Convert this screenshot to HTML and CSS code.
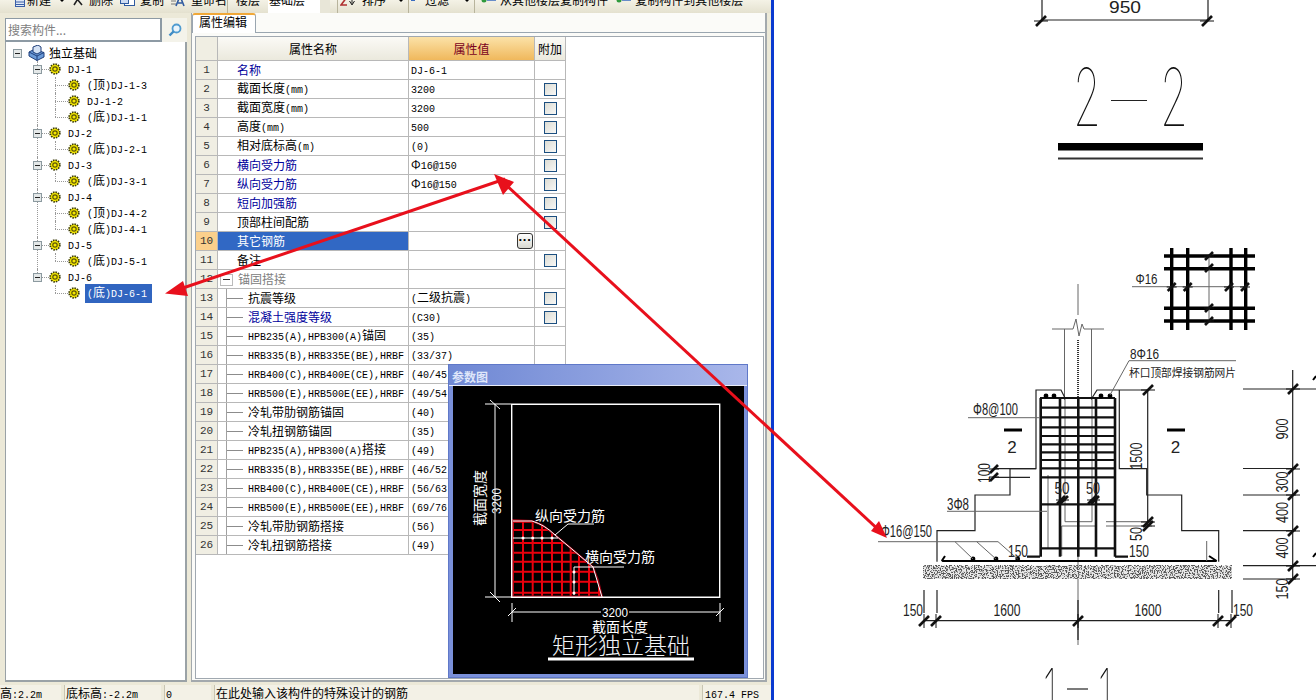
FILE: index.html
```html
<!DOCTYPE html>
<html lang="zh-CN">
<head>
    <meta charset="UTF-8">
    <title>独立基础 - 属性编辑</title>
    <link rel="stylesheet" href="styles.css">
</head>
<body>
<svg class="defs" width="0" height="0">
    <symbol id="gear" viewBox="0 0 12 12">
        <circle cx="6" cy="6" r="4.800" fill="#fff200" stroke="#3a3a08" stroke-width="1.800" stroke-dasharray="1.500 1"/>
        <circle cx="6" cy="6" r="2.200" fill="#f4e800" stroke="#5a5208" stroke-width="1.200"/>
    </symbol>
    <symbol id="minus" viewBox="0 0 9 9">
        <rect x=".5" y=".5" width="8" height="8" fill="#e4e8e8" stroke="#8c9aa0"/>
        <rect x="2" y="4" width="5" height="1" fill="#222"/>
    </symbol>
</svg>

<div class="app">
    <div class="toolbar">
        <div class="tool t-new">
            <svg width="10" height="14" viewBox="0 0 10 14"><rect x=".5" y=".5" width="9" height="13" fill="#dfe8f6" stroke="#3a5fa8"/><path d="M1 9h8M1 11.500h8" stroke="#3a5fa8"/></svg>
            <span>新建</span><i class="caret"></i>
        </div>
        <div class="tool t-del">
            <svg width="11" height="14" viewBox="0 0 11 14"><path d="M1 1l9 11M9 1L2 12" stroke="#222" stroke-width="1.600"/></svg>
            <span>删除</span>
        </div>
        <div class="tool t-copy">
            <svg width="15" height="14" viewBox="0 0 15 14"><rect x="4.500" y=".5" width="10" height="12" fill="#fff" stroke="#2f5aa0"/><rect x=".5" y="1.500" width="8" height="9" fill="#cfdcf2" stroke="#2f5aa0"/></svg>
            <span>复制</span>
        </div>
        <div class="tool t-ren">
            <svg width="15" height="14" viewBox="0 0 15 14"><path d="M1 11h5M1 8h5" stroke="#777"/><path d="M6 13L10 3L14 13M8 10h4" stroke="#2f5aa0" stroke-width="1.600" fill="none"/></svg>
            <span>重命名</span>
        </div>
        <b class="sep"></b>
        <div class="tool t-floor"><span>楼层</span></div>
        <div class="combo"><span>基础层</span></div>
        <div class="combo-btn"></div>
        <b class="sep"></b>
        <div class="tool t-sort">
            <svg width="16" height="14" viewBox="0 0 16 14"><path d="M1 4h6L1 12h6" stroke="#b03030" stroke-width="1.600" fill="none"/><path d="M12 2v9M9.500 8l2.500 4 2.500-4" stroke="#222" fill="none"/></svg>
            <span>排序</span><i class="caret"></i>
        </div>
        <b class="sep"></b>
        <div class="tool t-filter">
            <svg width="6" height="14" viewBox="0 0 6 14"><rect x="1" y="0" width="4" height="8" fill="#3a6cc0"/></svg>
            <span>过滤</span><i class="caret"></i>
        </div>
        <b class="sep"></b>
        <div class="tool t-from">
            <svg width="16" height="14" viewBox="0 0 16 14"><path d="M7 2h9M7 4.500h9M7 7h9" stroke="#3a6cc0" stroke-width="1.400"/><rect x="1" y="1" width="5" height="3" fill="#d04a40"/><circle cx="4" cy="7" r="2.500" fill="#2f9a3c"/></svg>
            <span>从其他楼层复制构件</span>
        </div>
        <div class="tool t-to">
            <svg width="16" height="14" viewBox="0 0 16 14"><path d="M7 2h9M7 4.500h9M7 7h9" stroke="#3a6cc0" stroke-width="1.400"/><rect x="1" y="1" width="5" height="3" fill="#3a6cc0"/><circle cx="4" cy="7" r="2.500" fill="#2f9a3c"/></svg>
            <span>复制构件到其他楼层</span>
        </div>
    </div>

    <div class="main">
        <div class="left-panel">
            <div class="search">
                <input class="search-input" type="text" placeholder="搜索构件...">
                <div class="search-btn">
                    <svg width="14" height="14" viewBox="0 0 14 14"><circle cx="8.500" cy="5.500" r="4" fill="#eaf4fb" stroke="#4f9bd0" stroke-width="1.800"/><path d="M5.500 8.500L1.500 12.500" stroke="#3f8bc4" stroke-width="2.400"/></svg>
                </div>
            </div>
            <div class="tree">
                <div class="root-row">
                    <svg class="tog" width="9" height="9"><use href="#minus"/></svg>
                    <svg class="root-icon" width="17" height="16" viewBox="0 0 17 16">
                        <path d="M1 7l5-2.500 10 3V12l-7 3.500L1 11z" fill="#6a9ad8" stroke="#1f3f7a"/>
                        <path d="M1 7l8 4 7-3.500" fill="none" stroke="#1f3f7a"/>
                        <path d="M5 2l5-2 3 2v5l-4 2-4-2z" fill="#d4e2f5" stroke="#1f3f7a"/>
                        <path d="M9 11v4.500" stroke="#1f3f7a"/>
                    </svg>
                    <span class="label">独立基础</span>
                </div>
                <ul class="lv1">
                    <li>
                        <div class="node"><svg class="tog" width="9" height="9"><use href="#minus"/></svg><i class="stub s1"></i><svg width="12" height="12"><use href="#gear"/></svg><span class="label"><span class="m">DJ-1</span></span></div>
                        <ul class="lv2">
                            <li><div class="leaf"><i class="stub s2"></i><svg width="12" height="12"><use href="#gear"/></svg><span class="label"><span class="m">(</span>顶<span class="m">)DJ-1-3</span></span></div></li>
                            <li><div class="leaf"><i class="stub s2"></i><svg width="12" height="12"><use href="#gear"/></svg><span class="label"><span class="m">DJ-1-2</span></span></div></li>
                            <li><div class="leaf"><i class="stub s2"></i><svg width="12" height="12"><use href="#gear"/></svg><span class="label"><span class="m">(</span>底<span class="m">)DJ-1-1</span></span></div></li>
                        </ul>
                    </li>
                    <li>
                        <div class="node"><svg class="tog" width="9" height="9"><use href="#minus"/></svg><i class="stub s1"></i><svg width="12" height="12"><use href="#gear"/></svg><span class="label"><span class="m">DJ-2</span></span></div>
                        <ul class="lv2">
                            <li><div class="leaf"><i class="stub s2"></i><svg width="12" height="12"><use href="#gear"/></svg><span class="label"><span class="m">(</span>底<span class="m">)DJ-2-1</span></span></div></li>
                        </ul>
                    </li>
                    <li>
                        <div class="node"><svg class="tog" width="9" height="9"><use href="#minus"/></svg><i class="stub s1"></i><svg width="12" height="12"><use href="#gear"/></svg><span class="label"><span class="m">DJ-3</span></span></div>
                        <ul class="lv2">
                            <li><div class="leaf"><i class="stub s2"></i><svg width="12" height="12"><use href="#gear"/></svg><span class="label"><span class="m">(</span>底<span class="m">)DJ-3-1</span></span></div></li>
                        </ul>
                    </li>
                    <li>
                        <div class="node"><svg class="tog" width="9" height="9"><use href="#minus"/></svg><i class="stub s1"></i><svg width="12" height="12"><use href="#gear"/></svg><span class="label"><span class="m">DJ-4</span></span></div>
                        <ul class="lv2">
                            <li><div class="leaf"><i class="stub s2"></i><svg width="12" height="12"><use href="#gear"/></svg><span class="label"><span class="m">(</span>顶<span class="m">)DJ-4-2</span></span></div></li>
                            <li><div class="leaf"><i class="stub s2"></i><svg width="12" height="12"><use href="#gear"/></svg><span class="label"><span class="m">(</span>底<span class="m">)DJ-4-1</span></span></div></li>
                        </ul>
                    </li>
                    <li>
                        <div class="node"><svg class="tog" width="9" height="9"><use href="#minus"/></svg><i class="stub s1"></i><svg width="12" height="12"><use href="#gear"/></svg><span class="label"><span class="m">DJ-5</span></span></div>
                        <ul class="lv2">
                            <li><div class="leaf"><i class="stub s2"></i><svg width="12" height="12"><use href="#gear"/></svg><span class="label"><span class="m">(</span>底<span class="m">)DJ-5-1</span></span></div></li>
                        </ul>
                    </li>
                    <li>
                        <div class="node"><svg class="tog" width="9" height="9"><use href="#minus"/></svg><i class="stub s1"></i><svg width="12" height="12"><use href="#gear"/></svg><span class="label"><span class="m">DJ-6</span></span></div>
                        <ul class="lv2">
                            <li><div class="leaf"><i class="stub s2"></i><svg width="12" height="12"><use href="#gear"/></svg><span class="label selected"><span class="m">(</span>底<span class="m">)DJ-6-1</span></span></div></li>
                        </ul>
                    </li>
                </ul>
            </div>
        </div>

        <div class="right-panel">
            <div class="tabs"><div class="tab">属性编辑</div></div>
            <div class="grid-frame">
                <table class="grid">
                    <colgroup><col class="c-num"><col class="c-name"><col class="c-val"><col class="c-ext"></colgroup>
                    <thead>
                        <tr><th class="num"></th><th>属性名称</th><th class="val-head">属性值</th><th>附加</th></tr>
                    </thead>
                    <tbody>
                        <tr><td class="num">1</td><td class="name blue">名称</td><td class="val"><span class="m">DJ-6-1</span></td><td></td></tr>
                        <tr><td class="num">2</td><td class="name">截面长度<span class="m">(mm)</span></td><td class="val"><span class="m">3200</span></td><td><input class="chk" type="checkbox"></td></tr>
                        <tr><td class="num">3</td><td class="name">截面宽度<span class="m">(mm)</span></td><td class="val"><span class="m">3200</span></td><td><input class="chk" type="checkbox"></td></tr>
                        <tr><td class="num">4</td><td class="name">高度<span class="m">(mm)</span></td><td class="val"><span class="m">500</span></td><td><input class="chk" type="checkbox"></td></tr>
                        <tr><td class="num">5</td><td class="name">相对底标高<span class="m">(m)</span></td><td class="val"><span class="m">(0)</span></td><td><input class="chk" type="checkbox"></td></tr>
                        <tr><td class="num">6</td><td class="name blue">横向受力筋</td><td class="val">Φ<span class="m">16@150</span></td><td><input class="chk" type="checkbox"></td></tr>
                        <tr><td class="num">7</td><td class="name blue">纵向受力筋</td><td class="val">Φ<span class="m">16@150</span></td><td><input class="chk" type="checkbox"></td></tr>
                        <tr><td class="num">8</td><td class="name blue">短向加强筋</td><td class="val"></td><td><input class="chk" type="checkbox"></td></tr>
                        <tr><td class="num">9</td><td class="name">顶部柱间配筋</td><td class="val"></td><td><input class="chk" type="checkbox"></td></tr>
                        <tr class="sel"><td class="num">10</td><td class="name">其它钢筋</td><td class="val"><div class="more">···</div></td><td></td></tr>
                        <tr><td class="num">11</td><td class="name">备注</td><td class="val"></td><td><input class="chk" type="checkbox"></td></tr>
                        <tr class="group"><td class="num">12</td><td class="name"><span class="box-tog"></span>锚固搭接</td><td class="val"></td><td></td></tr>
                        <tr><td class="num">13</td><td class="sub">抗震等级</td><td class="val"><span class="m">(</span>二级抗震<span class="m">)</span></td><td><input class="chk" type="checkbox"></td></tr>
                        <tr><td class="num">14</td><td class="sub blue">混凝土强度等级</td><td class="val"><span class="m">(C30)</span></td><td><input class="chk" type="checkbox"></td></tr>
                        <tr><td class="num">15</td><td class="sub"><span class="m">HPB235(A),HPB300(A)</span>锚固</td><td class="val"><span class="m">(35)</span></td><td></td></tr>
                        <tr><td class="num">16</td><td class="sub"><span class="m">HRB335(B),HRB335E(BE),HRBF</span></td><td class="val"><span class="m">(33/37)</span></td><td></td></tr>
                        <tr><td class="num">17</td><td class="sub"><span class="m">HRB400(C),HRB400E(CE),HRBF</span></td><td class="val"><span class="m">(40/45)</span></td><td></td></tr>
                        <tr><td class="num">18</td><td class="sub"><span class="m">HRB500(E),HRB500E(EE),HRBF</span></td><td class="val"><span class="m">(49/54)</span></td><td></td></tr>
                        <tr><td class="num">19</td><td class="sub">冷轧带肋钢筋锚固</td><td class="val"><span class="m">(40)</span></td><td></td></tr>
                        <tr><td class="num">20</td><td class="sub">冷轧扭钢筋锚固</td><td class="val"><span class="m">(35)</span></td><td></td></tr>
                        <tr><td class="num">21</td><td class="sub"><span class="m">HPB235(A),HPB300(A)</span>搭接</td><td class="val"><span class="m">(49)</span></td><td></td></tr>
                        <tr><td class="num">22</td><td class="sub"><span class="m">HRB335(B),HRB335E(BE),HRBF</span></td><td class="val"><span class="m">(46/52)</span></td><td></td></tr>
                        <tr><td class="num">23</td><td class="sub"><span class="m">HRB400(C),HRB400E(CE),HRBF</span></td><td class="val"><span class="m">(56/63)</span></td><td></td></tr>
                        <tr><td class="num">24</td><td class="sub"><span class="m">HRB500(E),HRB500E(EE),HRBF</span></td><td class="val"><span class="m">(69/76)</span></td><td></td></tr>
                        <tr><td class="num">25</td><td class="sub">冷轧带肋钢筋搭接</td><td class="val"><span class="m">(56)</span></td><td></td></tr>
                        <tr><td class="num">26</td><td class="sub">冷轧扭钢筋搭接</td><td class="val"><span class="m">(49)</span></td><td></td></tr>
                    </tbody>
                </table>
            </div>
        </div>
    </div>

    <div class="statusbar">
        <div class="st st-1">高<span class="m">:2.2m</span></div>
        <div class="st st-2">底标高<span class="m">:-2.2m</span></div>
        <div class="st st-3"><span class="m">0</span></div>
        <div class="st st-4">在此处输入该构件的特殊设计的钢筋</div>
        <div class="st st-5"><span class="m">167.4 FPS</span></div>
    </div>
</div>

<div class="drawing">
    <svg class="cad" width="542" height="700" viewBox="774 0 542 700">
        <defs>
            <g id="tk"><path d="M-5 5L5 -5" stroke="#111" stroke-width="2.600"/><path d="M-7 0H7" stroke="#111"/></g>
            <g id="tkv"><path d="M-5 5L5 -5" stroke="#111" stroke-width="2.600"/><path d="M0 -7V7" stroke="#111"/></g>
            <g id="tkh"><path d="M-4 4L4 -4" stroke="#111" stroke-width="2.600"/><path d="M-5 0H5" stroke="#111"/></g>
            <filter id="gravel" x="0" y="0" width="100%" height="100%">
                <feTurbulence type="fractalNoise" baseFrequency=".75" numOctaves="2" seed="4"/>
                <feColorMatrix type="matrix" values="0 0 0 0 .1  0 0 0 0 .1  0 0 0 0 .1  0 0 0 9 -4.300"/>
            </filter>
        </defs>

        <!-- 上部 950 和 2-2 -->
        <path class="ln" d="M1042 0V20H1208V0"/>
        <use href="#tk" x="1041" y="21"/><use href="#tk" x="1207" y="21"/>
        <text class="dim" x="1125" y="13" text-anchor="middle" textLength="32" lengthAdjust="spacingAndGlyphs">950</text>
        <text class="title" x="1087" y="126" text-anchor="middle" textLength="28" lengthAdjust="spacingAndGlyphs">2</text>
        <path class="ln" d="M1111 100.500H1147"/>
        <text class="title" x="1174" y="126" text-anchor="middle" textLength="28" lengthAdjust="spacingAndGlyphs">2</text>
        <rect x="1058" y="143" width="145" height="7.500" fill="#000"/>
        <path class="ln2" d="M1058 158.500H1203"/>

        <!-- 钢筋网片 -->
        <path class="heavy" d="M1171.700 248V330M1187.700 248V330M1231 248V330M1245.700 248V330M1164 256H1255M1164 268.700H1255M1164 308.300H1255M1164 321H1255"/>
        <path class="thin" d="M1209 256V321M1132 286.700H1248"/>
        <use href="#tkh" x="1171.700" y="287"/><use href="#tkh" x="1187.700" y="287"/><use href="#tkh" x="1229" y="287"/><use href="#tkh" x="1245" y="287"/>
        <use href="#tkh" x="1209" y="256"/><use href="#tkh" x="1209" y="268"/><use href="#tkh" x="1209" y="308"/><use href="#tkh" x="1209" y="321"/>
        <text class="dim sm" x="1135.500" y="284" textLength="22" lengthAdjust="spacingAndGlyphs">Φ16</text>

        <!-- 1-1 轮廓 -->
        <path class="thin" d="M1078 284V315M1052 329H1073L1076 319L1079 336L1082 324L1084 329H1104M1064.500 329V400M1091.500 329V400"/>
        <path class="dotted" d="M1078 340V398"/>
        <path class="ln" d="M1148 390H1097L1092 398H1065L1061 390H1036V468.700H1010V495H975V530.700H937V561.700M1119.300 390V468.700H1146.700V495H1181.700V530.700H1218.700V561.700"/>
        <path class="ln" d="M994 468.700H1036M994 477.300H1030M1147.700 390V525"/>
        <path class="thin" d="M1065 398V521.700H1092V398M1061.700 526V556M1061.700 526H1095M1106 521.700H1152M1106 526H1152M1048 475V548M1078 556V645"/>

        <!-- 箍筋 -->
        <path class="rebar" d="M1040.700 398V556.700M1060 398V556.700M1078.300 398V556.700M1096 398V556.700M1115 398V556.700"/>
        <path class="rebar-h" d="M1040 398H1115M1040 407.700H1115M1040 417.300H1115M1040 427.300H1115M1040 436H1115M1040 444.300H1115M1040 452.300H1115M1040 460H1115M1040 468.300H1115M1040 477.300H1115M1040 504.300H1115M1040 548.300H1115M1027 556.700H1040M1115 556.700H1128"/>
        <circle class="dot" cx="1046" cy="396" r="2.400"/><circle class="dot" cx="1054" cy="396" r="2.400"/><circle class="dot" cx="1101" cy="396" r="2.400"/><circle class="dot" cx="1110" cy="396" r="2.400"/>
        <path class="heavy-2" d="M941.700 561H1216.700M941.700 561L945 556M1216.700 561L1209 556"/>
        <path class="thin" d="M1206.700 541V561"/>
        <circle class="dot" cx="973" cy="559" r="2.400"/><circle class="dot" cx="996" cy="559" r="2.400"/><circle class="dot" cx="1017.700" cy="559" r="2.400"/>
        <path class="thin" d="M878 541.700H998L1017.700 559M955 541.700L973 559M976.700 541.700L996 559"/>
        <path class="thin" d="M1129 360.700H1236M1129 360.700L1110 395M968 417.700H1040M947 511.300H1047"/>
        <use href="#tk" x="1148" y="390"/><use href="#tk" x="1148" y="522"/><use href="#tk" x="1148" y="526"/>
        <use href="#tkh" x="994" y="469"/><use href="#tkh" x="994" y="477"/>
        <use href="#tkh" x="1061" y="500"/><use href="#tkh" x="1064" y="500"/><use href="#tkh" x="1092" y="500"/><use href="#tkh" x="1095" y="500"/>

        <!-- 垫层 -->
        <rect x="923.300" y="565.700" width="308.700" height="13.300" fill="#e8e8e8"/>
        <rect x="923.300" y="565.700" width="308.700" height="13.300" filter="url(#gravel)"/>

        <!-- 尺寸 -->
        <path class="ln" d="M924 590V613M937 590V613M1218.700 590V613M1232 590V613M923 620.700H1233M1078 600V640"/>
        <use href="#tkv" x="924" y="621"/><use href="#tkv" x="936" y="621"/><use href="#tkv" x="1078" y="621"/><use href="#tkv" x="1218" y="621"/><use href="#tkv" x="1231" y="621"/>
        <path class="ln" d="M1243 389H1316M1243 468.500H1296M1243 495H1296M1243 530.700H1296M1243 565.700H1316M1243 579H1296M1292.700 370V580"/>
        <use href="#tk" x="1293" y="389"/><use href="#tk" x="1293" y="469"/><use href="#tk" x="1293" y="495"/><use href="#tk" x="1293" y="531"/><use href="#tk" x="1293" y="566"/><use href="#tk" x="1293" y="579"/>
        <path class="heavy-2" d="M1313 380L1316 376M1313 557L1316 553"/>

        <text class="dim" x="913" y="616" text-anchor="middle" textLength="20" lengthAdjust="spacingAndGlyphs">150</text>
        <text class="dim" x="1007" y="616" text-anchor="middle" textLength="27" lengthAdjust="spacingAndGlyphs">1600</text>
        <text class="dim" x="1148" y="616" text-anchor="middle" textLength="27" lengthAdjust="spacingAndGlyphs">1600</text>
        <text class="dim" x="1243" y="616" text-anchor="middle" textLength="20" lengthAdjust="spacingAndGlyphs">150</text>
        <text class="dim" transform="rotate(-90 1288 429)" x="1288" y="429" text-anchor="middle" textLength="21" lengthAdjust="spacingAndGlyphs">900</text>
        <text class="dim" transform="rotate(-90 1288 482)" x="1288" y="482" text-anchor="middle" textLength="21" lengthAdjust="spacingAndGlyphs">300</text>
        <text class="dim" transform="rotate(-90 1288 512.500)" x="1288" y="512.500" text-anchor="middle" textLength="21" lengthAdjust="spacingAndGlyphs">400</text>
        <text class="dim" transform="rotate(-90 1288 548)" x="1288" y="548" text-anchor="middle" textLength="21" lengthAdjust="spacingAndGlyphs">400</text>
        <text class="dim" transform="rotate(-90 1288 589)" x="1288" y="589" text-anchor="middle" textLength="21" lengthAdjust="spacingAndGlyphs">150</text>
        <text class="dim" transform="rotate(-90 1142 456)" x="1142" y="456" text-anchor="middle" textLength="27" lengthAdjust="spacingAndGlyphs">1500</text>
        <text class="dim" transform="rotate(-90 1142 534)" x="1142" y="534" text-anchor="middle" textLength="14" lengthAdjust="spacingAndGlyphs">50</text>
        <text class="dim" transform="rotate(-90 990 473)" x="990" y="473" text-anchor="middle" textLength="20" lengthAdjust="spacingAndGlyphs">100</text>
        <text class="dim" x="1062" y="494" text-anchor="middle" textLength="15" lengthAdjust="spacingAndGlyphs">50</text>
        <text class="dim" x="1093" y="494" text-anchor="middle" textLength="14" lengthAdjust="spacingAndGlyphs">50</text>
        <text class="dim" x="1008" y="557" textLength="20" lengthAdjust="spacingAndGlyphs">150</text>
        <text class="dim" x="1129" y="557" textLength="20" lengthAdjust="spacingAndGlyphs">150</text>
        <text class="dim" x="881" y="537" textLength="51" lengthAdjust="spacingAndGlyphs">Φ16@150</text>
        <text class="dim" x="947" y="510" textLength="22" lengthAdjust="spacingAndGlyphs">3Φ8</text>
        <text class="dim" x="973" y="415" textLength="45" lengthAdjust="spacingAndGlyphs">Φ8@100</text>
        <text class="dim sm" x="1130" y="359" textLength="29" lengthAdjust="spacingAndGlyphs">8Φ16</text>
        <text class="cn" x="1129" y="377" textLength="107" lengthAdjust="spacingAndGlyphs">杯口顶部焊接钢筋网片</text>
        <rect x="1004" y="428.500" width="18" height="3" fill="#000"/>
        <rect x="1167" y="428.500" width="18" height="3" fill="#000"/>
        <text class="dim" x="1012" y="453" text-anchor="middle" font-size="19">2</text>
        <text class="dim" x="1175.500" y="453" text-anchor="middle" font-size="19">2</text>

        <text class="title" x="1050" y="726" text-anchor="middle" textLength="14" lengthAdjust="spacingAndGlyphs">1</text>
        <path class="ln" d="M1067 689H1088"/>
        <text class="title" x="1105" y="726" text-anchor="middle" textLength="14" lengthAdjust="spacingAndGlyphs">1</text>
    </svg>
</div>

<div class="param-win">
    <div class="param-title">参数图</div>
    <svg class="param-draw" width="291" height="288" viewBox="453 386 291 288">
        <defs>
            <clipPath id="hatch"><path d="M512.500 520L532 521L542 525L555 535L573 550L593 567L598 580L602 596.500H512.500Z"/></clipPath>
        </defs>
        <g clip-path="url(#hatch)">
            <path class="red" d="M513 521.700H605M513 530H605M513 543H605M513 552.700H605M513 561.700H605M513 571.700H605M513 581.700H605M513 592.700H605M513 515V600M523 515V600M532.700 515V600M542 515V600M552 515V600M562 515V600M570.700 515V600M579 515V600M589 515V600M599 515V600"/>
        </g>
        <path class="red-edge" d="M512.500 520L532 521L542 525L555 535L573 550L593 567L598 580L602 596.500H512.500Z"/>
        <path class="wt2" d="M511.700 404.300H719.700V597.300H511.700Z"/>
        <path class="wt" d="M485 404H511M485 597H511M495 404V597M490 400L500 409M490 592L500 602M512 612H720M512 603V622M720 603V622M508 616L516 608M716 616L724 608"/>
        <path class="wt" d="M513 521H532Q545 525 555 535L573 550L593 567L602 597M513 538H558M594 524H568L555 535M624 567H574V595"/>
        <path class="wt-dots" d="M523 538h.01M532.700 538h.01M542 538h.01M552 538h.01M574 572h.01M574 582h.01M574 593h.01"/>
        <rect x="601" y="606" width="28" height="12" fill="#000"/>
        <text class="pt" x="615" y="616.500" text-anchor="middle" textLength="26" lengthAdjust="spacingAndGlyphs">3200</text>
        <text class="pt" transform="rotate(-90 496 501)" x="496" y="506" text-anchor="middle" textLength="26" lengthAdjust="spacingAndGlyphs">3200</text>
        <text class="pc" transform="rotate(-90 480 498)" x="480" y="503" text-anchor="middle">截面宽度</text>
        <text class="pc" x="620" y="632" text-anchor="middle">截面长度</text>
        <text class="pc" x="535" y="521">纵向受力筋</text>
        <text class="pc" x="585" y="562">横向受力筋</text>
        <text class="pbig" x="621" y="654" text-anchor="middle">矩形独立基础</text>
        <rect x="548" y="657.500" width="146" height="3" fill="#fff"/>
    </svg>
</div>

<svg class="arrows" width="1316" height="700" viewBox="0 0 1316 700">
    <path class="arrow" d="M180 289L505 179"/>
    <path class="arrow-head" d="M165 293.500L183 281L188 296Z"/>
    <path class="arrow" d="M505 184L882 533"/>
    <path class="arrow-head" d="M494 174L514 182L503 195Z"/>
    <path class="arrow-head" d="M887 538L871 531L879 521Z"/>
</svg>
</body>
</html>
```

FILE: styles.css
```css
* {
    box-sizing: border-box;
}
html, body {
    margin: 0;
    height: 100%;
}
body {
    width: 1316px;
    height: 700px;
    position: relative;
    overflow: hidden;
    display: flex;
    background: #fff;
    font-family: "Noto Sans CJK SC", sans-serif;
    font-size: 12px;
    color: #000;
}
.defs {
    position: absolute;
}
.m {
    font-family: "Liberation Mono", monospace;
    font-size: 10px;
}

/* 主窗口 */
.app {
    width: 774px;
    height: 700px;
    flex: none;
    display: flex;
    flex-direction: column;
    background: #ece9d8;
    border-right: 3px solid #0a3ad0;
}
.toolbar {
    height: 13px;
    flex: none;
    overflow: hidden;
    display: flex;
    align-items: flex-end;
    background: linear-gradient(#f4f2e6, #e4e1cf);
    line-height: 14px;
}
.tool {
    height: 26px;
    flex: none;
    display: flex;
    align-items: center;
}
.tool svg {
    flex: none;
}
.caret {
    width: 0;
    height: 0;
    margin-left: 6px;
    border: 3px solid transparent;
    border-top: 3px solid #000;
    border-bottom: 0;
}
.sep {
    width: 1px;
    height: 26px;
    flex: none;
    background: #b8b49c;
}
.t-new { margin-left: 15px; gap: 2px; }
.t-del { margin-left: 7px; gap: 6px; }
.t-copy { margin-left: 7px; gap: 5px; }
.t-ren { margin-left: 6px; gap: 6px; }
.t-floor { margin-left: 8px; }
.combo {
    width: 52px;
    height: 26px;
    flex: none;
    margin-left: 8px;
    padding-left: 1px;
    display: flex;
    align-items: center;
    background: #fff;
}
.combo-btn {
    width: 10px;
    height: 26px;
    flex: none;
    background: #e8e6d8;
    margin-right: 7px;
}
.t-sort { margin-left: 2px; gap: 6px; }
.t-filter { margin-left: 1px; gap: 9px; }
.t-from { margin-left: 5px; gap: 4px; }
.t-to { margin-left: 7px; gap: 4px; }
.t-filter + .sep { margin-left: 4px; }
.t-sort + .sep { margin-left: 4px; }

.main {
    flex: 1;
    min-height: 0;
    display: flex;
    padding: 0 3px 3px 5px;
}

/* 左侧构件树 */
.left-panel {
    width: 182px;
    flex: none;
    padding-top: 5px;
    display: flex;
    flex-direction: column;
}
.search {
    height: 24px;
    flex: none;
    display: flex;
    background: #f4f3ea;
}
.search-input {
    width: 157px;
    height: 24px;
    padding: 0 2px;
    border: 1px solid #8d9aa4;
    border-width: 1px 2px 2px 1px;
    outline: none;
    font: 12px "Noto Sans CJK SC", sans-serif;
    background: #fff;
}
.search-input::placeholder {
    color: #808080;
    opacity: 1;
}
.search-btn {
    flex: 1;
    display: flex;
    align-items: center;
    justify-content: center;
}
.tree {
    flex: 1;
    background: #fff;
    border: 1px solid #9aa2a6;
    border-width: 0 2px 2px 1px;
    padding-top: 3px;
    line-height: 16px;
}
.tree ul {
    list-style: none;
    margin: 0;
}
.tree li {
    position: relative;
}
.tree li::before {
    content: "";
    position: absolute;
    left: 0;
    top: 0;
    bottom: 0;
    border-left: 1px dotted #999;
}
.tree li:last-child::before {
    bottom: auto;
    height: 8px;
}
.root-row, .node, .leaf {
    height: 16px;
    display: flex;
    align-items: center;
    position: relative;
    white-space: nowrap;
}
.root-row {
    padding-left: 7px;
}
.root-icon {
    margin-left: 6px;
}
.root-row .label {
    margin-left: 4px;
}
.tog {
    flex: none;
}
.stub {
    flex: none;
    height: 0;
    border-top: 1px dotted #999;
}
.s1 { width: 7px; }
.s2 { width: 13px; }
.lv1 {
    padding: 0 0 0 31px;
}
.lv2 {
    padding: 0 0 0 18px;
}
.node {
    margin-left: -4px;
}
.node .label {
    margin-left: 7px;
}
.leaf .label {
    margin-left: 7px;
}
.label.selected {
    margin-left: 5px;
    padding: 0 2px;
    width: 67px;
    background: #3165c0;
    color: #fff;
}

/* 属性编辑 */
.right-panel {
    width: 576px;
    flex: none;
    margin-left: 4px;
    display: flex;
    flex-direction: column;
    background: #fbfbf8;
    border: 1px solid #a3a9ad;
    border-width: 0 2px 2px 1px;
}
.tabs {
    height: 20px;
    flex: none;
    border-bottom: 1px solid #9aa6b0;
}
.tab {
    width: 64px;
    height: 20px;
    padding-left: 6px;
    line-height: 14px;
    background: #fff;
    border: 1px solid #9aa6b0;
    border-top: 2px solid #f0a838;
    border-bottom: 0;
    border-radius: 3px 3px 0 0;
}
.grid-frame {
    flex: 1;
    margin: 3px 1px 1px 3px;
    background: #fff;
    border: 1px solid #a0a8b0;
    overflow: hidden;
}
.grid {
    border-collapse: separate;
    border-spacing: 0;
    table-layout: fixed;
    width: 370px;
}
.c-num { width: 22px; }
.c-name { width: 191px; }
.c-val { width: 126px; }
.c-ext { width: 31px; }
.grid th, .grid td {
    padding: 0;
    border-right: 1px solid #b8b8b8;
    border-bottom: 1px solid #b8b8b8;
    box-sizing: content-box;
    overflow: hidden;
    white-space: nowrap;
}
.grid th {
    height: 23px;
    line-height: 16px;
    font-weight: normal;
    text-align: center;
    background: linear-gradient(#fbfaf6, #ebe9dd);
}
.grid th.val-head {
    background: linear-gradient(#fbe2a8, #f0b85c);
    color: #7a0020;
}
.grid td {
    height: 18px;
    line-height: 12px;
}
.grid .num {
    text-align: center;
    background: #f0eee3;
    font-family: "Liberation Mono", monospace;
    font-size: 11px;
    color: #333;
}
.name {
    padding-left: 19px !important;
}
.blue {
    color: #00009c;
}
.val {
    padding-left: 2px !important;
}
.sub {
    padding-left: 30px !important;
    position: relative;
    background:
        linear-gradient(#a0a0a0, #a0a0a0) 8px 0 / 1px 100% no-repeat,
        linear-gradient(#8c8c8c, #8c8c8c) 8px 50% / 17px 1px no-repeat;
}
.chk {
    appearance: none;
    display: block;
    width: 13px;
    height: 13px;
    margin: 0 auto;
    border: 1px solid #1c4f80;
    background: linear-gradient(135deg, #dcdcd4, #f8f8f6);
}
.sel .num {
    background: #fbd08c;
}
.sel .name {
    background: #3168c4;
    color: #fff;
}
.sel .val {
    padding-right: 1px;
}
.more {
    width: 16px;
    height: 16px;
    margin-left: auto;
    border: 1px solid #333;
    border-radius: 3px;
    background: linear-gradient(#fff, #d8d8d0);
    line-height: 12px;
    font-size: 13px;
    font-weight: bold;
    text-align: center;
    font-family: "Liberation Sans", sans-serif;
}
.group .name {
    padding-left: 2px !important;
    color: #808080;
}
.box-tog {
    display: inline-block;
    width: 13px;
    height: 12px;
    margin-right: 5px;
    vertical-align: -2px;
    border: 1px solid #bbb;
    background: linear-gradient(#333, #333) center / 7px 1px no-repeat;
}

/* 状态栏 */
.statusbar {
    height: 15px;
    flex: none;
    display: flex;
    gap: 3px;
    line-height: 16px;
    background: #ece9d8;
    overflow: hidden;
}
.st {
    border-left: 1px solid #c8c5b2;
    padding-left: 1px;
    white-space: nowrap;
    background: #f3f1e6;
}
.st-1 { width: 61px; border-left: 0; padding-left: 0; }
.st-2 { width: 97px; }
.st-3 { width: 47px; }
.st-4 { width: 485px; }
.st-5 { flex: 1; padding-left: 2px; }

/* 右侧图纸 */
.drawing {
    flex: 1;
    min-width: 0;
}
.cad {
    display: block;
    fill: none;
}
.ln { stroke: #222; stroke-width: 1.2; fill: none; }
.ln2 { stroke: #333; stroke-width: 2; fill: none; }
.thin { stroke: #666; stroke-width: 1; fill: none; }
.dotted { stroke: #333; stroke-width: 2; stroke-dasharray: 1 1; fill: none; }
.heavy { stroke: #000; stroke-width: 3.4; fill: none; }
.heavy-2 { stroke: #000; stroke-width: 2; fill: none; }
.rebar { stroke: #111; stroke-width: 2.6; fill: none; }
.rebar-h { stroke: #111; stroke-width: 2.2; fill: none; }
.dot { fill: #000; }
.dim {
    font-family: "Liberation Sans", "Noto Sans CJK SC", sans-serif;
    font-size: 17px;
    fill: #222;
}
.dim.sm { font-size: 14px; }
.cn {
    font-family: "Noto Sans CJK SC", sans-serif;
    font-size: 11px;
    fill: #222;
}
.title {
    font-family: "Inter", "Lato", sans-serif;
    font-weight: 100;
    font-size: 80px;
    fill: #111;
}

/* 参数图 */
.param-win {
    position: absolute;
    left: 448px;
    top: 364px;
    width: 300px;
    height: 314px;
    padding: 0 3px 4px 4px;
    background: #7a90da;
    border: 1px solid #5f78c8;
    display: flex;
    flex-direction: column;
}
.param-title {
    height: 21px;
    flex: none;
    margin: 0 -3px 0 -4px;
    padding-left: 3px;
    line-height: 23px;
    font-weight: bold;
    color: #dfe6fa;
    background: linear-gradient(90deg, #6f88d4, #a9b7ea);
    border-bottom: 1px solid #e8ecf8;
}
.param-draw {
    display: block;
    flex: none;
    background: #000;
}
.wt { stroke: #fff; stroke-width: 1; fill: none; }
.wt2 { stroke: #fff; stroke-width: 1.4; fill: none; }
.wt-dots { stroke: #fff; stroke-width: 3; stroke-linecap: round; fill: none; }
.red { stroke: #e8000c; stroke-width: 2; fill: none; }
.red-edge { stroke: #900010; stroke-width: 2; fill: none; }
.pc {
    font-family: "Noto Sans CJK SC", sans-serif;
    font-size: 14px;
    fill: #fff;
}
.pt {
    font-family: "Liberation Sans", sans-serif;
    font-size: 13px;
    fill: #fff;
}
.pbig {
    font-family: "Noto Sans CJK SC", sans-serif;
    font-size: 23px;
    font-weight: 300;
    fill: #f0f4f8;
}

/* 标注箭头 */
.arrows {
    position: absolute;
    left: 0;
    top: 0;
    pointer-events: none;
}
.arrow { stroke: #e8101c; stroke-width: 3; fill: none; }
.arrow-head { fill: #e8101c; }
```
